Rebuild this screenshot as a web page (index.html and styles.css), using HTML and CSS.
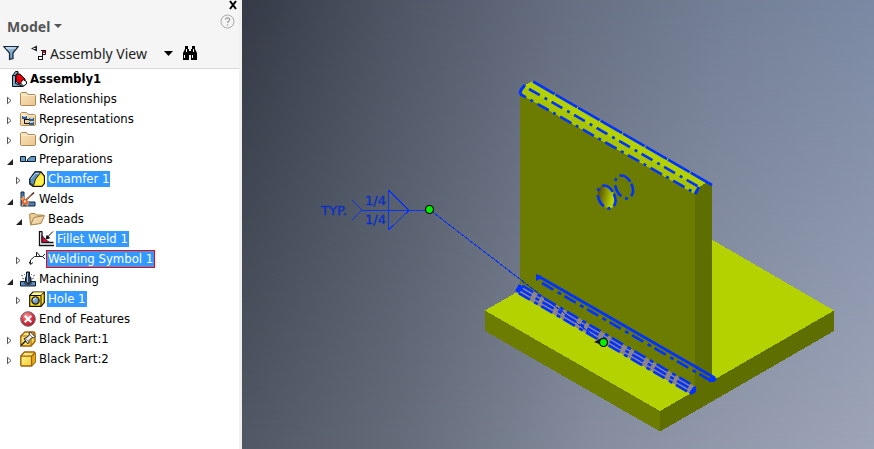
FILE: index.html
```html
<!DOCTYPE html>
<html lang="en">
<head>
<meta charset="utf-8">
<title>Assembly1</title>
<link rel="stylesheet" href="styles.css">
</head>
<body>
<svg class="defs" aria-hidden="true">
  <defs>
    <linearGradient id="tan" x1="0" y1="0" x2="1" y2="1"><stop offset="0" stop-color="#fbe6c0"/><stop offset="1" stop-color="#e8c48c"/></linearGradient>
    <linearGradient id="steel" x1="0" y1="0" x2="1" y2="1"><stop offset="0" stop-color="#b9d6ee"/><stop offset="1" stop-color="#4d7ba6"/></linearGradient>
    <linearGradient id="gold" x1="0" y1="0" x2="1" y2="1"><stop offset="0" stop-color="#fff8a0"/><stop offset="1" stop-color="#f3c81e"/></linearGradient>
    <radialGradient id="stop" cx=".4" cy=".3" r=".8"><stop offset="0" stop-color="#ff9a9a"/><stop offset=".5" stop-color="#e23440"/><stop offset="1" stop-color="#a30f1c"/></radialGradient>
    <symbol id="closed" viewBox="0 0 5 8"><path d="M.5 .8V7.2L4 4Z" fill="#fff" stroke="#555"/></symbol>
    <symbol id="open" viewBox="0 0 6 6"><path d="M6 0V6H0Z" fill="#222"/></symbol>
    <symbol id="folder" viewBox="0 0 16 16"><path d="M.5 14V2.500L1.500 1.500H6.500L8 3.500H14.500L15.500 4.500V14L14.500 14.500H1.500Z" fill="url(#tan)" stroke="#b08a56"/><path d="M1.500 4.500H14.500" stroke="#f9ecd4"/></symbol>
  </defs>
</svg>
<div class="app">
  <aside class="panel">
    <header class="head">
      <div class="closebar">
        <button class="plain" aria-label="Close"><svg width="10" height="10" viewBox="0 0 10 10"><path d="M2 1L8 9M8 1L2 9" stroke="#000" stroke-width="2"/></svg></button>
      </div>
      <div class="titlebar">
        <button class="plain title">Model <svg width="8" height="4" viewBox="0 0 8 4"><path d="M0 0H8L4 4Z" fill="#555"/></svg></button>
        <button class="plain help" aria-label="Help"><svg width="15" height="15" viewBox="0 0 15 15"><circle cx="7.500" cy="7.500" r="6.500" fill="none" stroke="#aaa"/><path d="M5.500 5.800C5.500 3.200 9.600 3.200 9.600 5.700C9.600 7.200 7.500 7.200 7.500 9M7.500 10.300V11.600" fill="none" stroke="#999" stroke-width="1.200"/></svg></button>
      </div>
      <div class="tools">
        <button class="plain" aria-label="Filter"><svg width="16" height="16" viewBox="0 0 16 16"><path d="M.7 1.500H15.300L10 8V13.500L6.500 14.500V8Z" fill="url(#steel)" stroke="#16293c" stroke-width="1.200"/><path d="M3 3H13" stroke="#e4f1fb"/></svg></button>
        <label class="view">
          <svg width="16" height="16" viewBox="0 0 16 16"><path d="M0 3.500L6 .5V6.500Z" fill="#222"/><path d="M2.500 3.500H4.500" stroke="#fff"/><path d="M7.500 11.500H11.500V6.500H13" fill="none" stroke="#111"/><rect x="7.500" y="11.500" width="4" height="3" fill="#fff" stroke="#111"/><rect x="12" y="5" width="3" height="3" fill="#e00010"/><path d="M10 5.500H14.500V9.500H12" fill="none" stroke="#111"/></svg>
          <select aria-label="Browser view"><option>Assembly View</option></select>
          <svg class="arrow" width="9" height="5" viewBox="0 0 9 5"><path d="M0 0H9L4.500 5Z" fill="#000"/></svg>
        </label>
        <button class="plain" aria-label="Find"><svg width="16" height="14" viewBox="0 0 16 14"><path d="M3 0H6V3H7V5H9V3H10V0H13V3L15 7V14H9V9H7V14H1V7L3 3Z" fill="#000"/><path d="M2.500 9V12M10.500 9V12M4.500 3V6M11.500 3V6" stroke="#f5f5f5"/></svg></button>
      </div>
    </header>
    <ul class="tree">
      <li>
        <div class="row root"><svg class="icon" viewBox="0 0 16 16"><path d="M1.500 4.500L4.500 .5H7V11L15 13L12 15.500H1.500Z" fill="#7dabd0" stroke="#111"/><path d="M1.500 4.500H4.500V12.500L12 15.500M4.500 4.500L7 1.500" fill="none" stroke="#111"/><path d="M5 3.500L9 3L14 8L14.500 11.500L8 13L5 10Z" fill="#e8000c" stroke="#111"/><path d="M9.500 12L12 8.500L15.500 10.500V13L12.500 15Z" fill="#fff" stroke="#111"/></svg><span class="name">Assembly1</span></div>
        <ul>
          <li><div class="row"><button class="toggle" aria-label="Expand"><svg class="shut"><use href="#closed"/></svg></button><svg class="icon"><use href="#folder"/></svg><span class="name">Relationships</span></div></li>
          <li><div class="row"><button class="toggle" aria-label="Expand"><svg class="shut"><use href="#closed"/></svg></button><svg class="icon" viewBox="0 0 16 16"><use href="#folder" width="16" height="16"/><path d="M4.500 7V12.500H10M4.500 8.500H10" fill="none" stroke="#111"/><path d="M2 5H7V8H2ZM9 7H14V10H9ZM9 11H14V14H9Z" fill="#2c5e92"/><path d="M3 5.500H6M10 7.500H13M10 11.500H13" stroke="#a8cdf0"/></svg><span class="name">Representations</span></div></li>
          <li><div class="row"><button class="toggle" aria-label="Expand"><svg class="shut"><use href="#closed"/></svg></button><svg class="icon"><use href="#folder"/></svg><span class="name">Origin</span></div></li>
          <li>
            <div class="row"><button class="toggle" aria-label="Collapse"><svg class="down"><use href="#open"/></svg></button><svg class="icon" viewBox="0 0 16 16"><path d="M.5 5.500H5.500V10.500H.5ZM7.500 10.500V8.500L11 5.500H15.500V10.500Z" fill="#679bc8" stroke="#0b1c30"/><path d="M5.500 10.500H8" stroke="#0b1c30"/></svg><span class="name">Preparations</span></div>
            <ul><li><div class="row"><button class="toggle" aria-label="Expand"><svg class="shut"><use href="#closed"/></svg></button><svg class="icon" viewBox="0 0 16 16"><path d="M.7 8L6 .8H12L15.400 5V12.500L13 15.300H4L.7 13Z" fill="#ffdf2e" stroke="#1b1600" stroke-width="1.200"/><path d="M.9 8L6 1H12L6.500 8L4.500 14.500L1 12Z" fill="#5d8fbe" stroke="#14283d"/><path d="M2 8L6.500 2.500H10" fill="none" stroke="#b9d9f3"/><path d="M7.500 9L12.500 3.500L14.500 6V12L12.500 14.300H6Z" fill="#fff04d"/></svg><span class="name picked">Chamfer 1</span></div></li></ul>
          </li>
          <li>
            <div class="row"><button class="toggle" aria-label="Collapse"><svg class="down"><use href="#open"/></svg></button><svg class="icon" viewBox="0 0 16 16"><path d="M1 1H4V11H15V15H1Z" fill="#4e82b4" stroke="#0d2640"/><path d="M4 11L1 7M4 11L2 15M4 11L8 15M4 11L9 12M4 11L3 5" stroke="#ff9a4a" stroke-width="1.500"/><circle cx="5" cy="10.500" r="2.600" fill="#f0501c"/><circle cx="5" cy="10.500" r="1.200" fill="#ffe0a0"/><path d="M6.500 8.500L14 1.500" stroke="#4a2520" stroke-width="1.600"/><path d="M7 8.300L11.500 4" stroke="#ff8a5a"/></svg><span class="name">Welds</span></div>
            <ul>
              <li>
                <div class="row"><button class="toggle" aria-label="Collapse"><svg class="down"><use href="#open"/></svg></button><svg class="icon" viewBox="0 0 16 16"><path d="M1.500 13.500L.5 3.500L2 2.500H6L7.500 4H13.500V6.500" fill="#eccd94" stroke="#a3834e"/><path d="M1.500 14L5 6.500L15.500 4.500L12 12.500Z" fill="url(#tan)" stroke="#a3834e"/></svg><span class="name">Beads</span></div>
                <ul><li><div class="row leaf"><svg class="icon" viewBox="0 0 16 16"><path d="M1 .5H4V11.500H15.500V15H1Z" fill="#fff"/><path d="M1.500 0V14.500H16M1 .7H4.500M4 1V11.500H15.500" fill="none" stroke="#111" stroke-width="1.300"/><path d="M4 4.500V11.500H11.500Q7 9 4 4.500Z" fill="#d90f2b" stroke="#20102c"/><path d="M15 .5L9.500 6M8 8L9 4.500L11.500 7Z" stroke="#111" fill="#111"/></svg><span class="name picked">Fillet Weld 1</span></div></li></ul>
              </li>
              <li><div class="row"><button class="toggle" aria-label="Expand"><svg class="shut"><use href="#closed"/></svg></button><svg class="icon" viewBox="0 0 16 16"><path d="M1.500 13V9L5.500 5.500H14M0 10.500L1.500 13.500L4 11.500M7.500 5V1L11.500 5.500M13.500 5.500L16 3M13.500 5.500L16 8" fill="none" stroke="#222"/></svg><span class="name picked framed">Welding Symbol 1</span></div></li>
            </ul>
          </li>
          <li>
            <div class="row"><button class="toggle" aria-label="Collapse"><svg class="down"><use href="#open"/></svg></button><svg class="icon" viewBox="0 0 16 16"><path d="M.5 10.500H5V13H11V10.500H15.500V15H.5Z" fill="#5c8cba" stroke="#0d1c30"/><path d="M6.500 1H9.500V5L11 7V11L8 13.500L5.500 11V7L6.500 5Z" fill="#30445f" stroke="#0b1422"/><path d="M7.500 2V11" stroke="#a8c5df"/><path d="M1 4L3 5M2 7L4 8M4 3L5 4M15 4L13 5M14 7L12 8M12 3L11 4" stroke="#777"/></svg><span class="name">Machining</span></div>
            <ul><li><div class="row"><button class="toggle" aria-label="Expand"><svg class="shut"><use href="#closed"/></svg></button><svg class="icon" viewBox="0 0 16 16"><path d="M.7 4.500L4 1H15.300V11.500L12 15.300H.7Z" fill="#ffe028" stroke="#191400" stroke-width="1.200"/><path d="M1.500 4.500L4.500 1.600H14.500L12 4.500Z" fill="#fff79c"/><path d="M.7 4.500H12V15M12 4.500L15.300 1" fill="none" stroke="#191400"/><circle cx="6.500" cy="9.500" r="3.600" fill="url(#steel)" stroke="#131313" stroke-width="1.300"/><path d="M4 9L7 6.500" stroke="#e5f3ff"/></svg><span class="name picked">Hole 1</span></div></li></ul>
          </li>
          <li><div class="row bare"><svg class="icon" viewBox="0 0 16 16"><circle cx="8" cy="8" r="7.300" fill="url(#stop)" stroke="#6d6d72"/><path d="M4.700 4.700L11.300 11.300M11.300 4.700L4.700 11.300" stroke="#fff" stroke-width="2.200"/></svg><span class="name">End of Features</span></div></li>
          <li><div class="row"><button class="toggle" aria-label="Expand"><svg class="shut"><use href="#closed"/></svg></button><svg class="icon" viewBox="0 0 16 16"><path d="M.8 5L5 1H14L15 2.500V10.500L11 15H.8Z" fill="url(#gold)" stroke="#a0600c" stroke-width="1.400"/><path d="M1 5H11V15M11 5L15 1.500" fill="none" stroke="#a0600c"/><path d="M1 14.500L6 9.500" stroke="#111" stroke-width="1.300"/><path d="M4 7.500L6 7L9.500 4L9 2L10.500 1L15 5.500L13.500 7L12 6.500L9 9.500V12L7.500 12.500Z" fill="#eee" stroke="#222"/><path d="M6 8L9 11M10 4L12 6" stroke="#888"/></svg><span class="name">Black Part:1</span></div></li>
          <li><div class="row"><button class="toggle" aria-label="Expand"><svg class="shut"><use href="#closed"/></svg></button><svg class="icon" viewBox="0 0 16 16"><path d="M.8 5L4.500 1H14L15.200 2V11L11.500 15H1.500L.8 14Z" fill="url(#gold)" stroke="#a0600c" stroke-width="1.400"/><path d="M11.500 5.500L15 2V11L11.500 14.500Z" fill="#e2a813"/><path d="M1 5.200H11.500V15M11.500 5.200L15 1.800" fill="none" stroke="#a0600c" stroke-width="1.200"/></svg><span class="name">Black Part:2</span></div></li>
        </ul>
      </li>
    </ul>
  </aside>
  <main class="viewport">
    <svg class="model" viewBox="242 0 632 449" preserveAspectRatio="xMinYMin slice" role="img" aria-label="Welded assembly">
      <defs><linearGradient id="bore" x1="0" y1="0" x2=".9" y2="1"><stop offset=".2" stop-color="#5b5200"/><stop offset=".75" stop-color="#b4d200"/></linearGradient></defs>
      <g shape-rendering="crispEdges">
        <path d="M485 310.500L660 209.500L834 310.500L660 411Z" fill="#b4d200"/>
        <path d="M485 310.500L660 411V431.500L485 331Z" fill="#6b7c00"/>
        <path d="M660 411L834 310.500V331L660 431.500Z" fill="#5f6e00"/>
        <path d="M520 93L695 193V391L520 290Z" fill="#6b7c00"/>
        <path d="M695 193L699 186L706 182L712 184V383L695 393Z" fill="#5f6e00"/>
        <path d="M520 94L523 86L533 81L712 184L706 183L699 187L695 194Z" fill="#b4d200"/>
        <path d="M520 94L525 88L699 187L695 194Z" fill="#a9c500"/>
        <path d="M515 292L521 284L696 387L691 394Z" fill="#8b8588"/>
      </g>
      <g fill="none" stroke="#0032ff" stroke-width="2.600">
        <path d="M533 81.500L712 185" stroke-dasharray="25 1"/>
        <path d="M529 89L699 187" stroke-dasharray="12.500 5.500 3 5"/>
        <path d="M520 94L695 193" stroke-dasharray="13 5 3 5" stroke-dashoffset="6"/>
        <path d="M520 94L521 90L525 85M695 194L699 187" stroke-width="3"/>
        <ellipse cx="606.500" cy="197" rx="8" ry="12" transform="rotate(-25 606.500 197)" fill="url(#bore)" stroke-dasharray="13 4 3 4"/>
        <ellipse cx="624" cy="187" rx="8" ry="12" transform="rotate(-25 624 187)" stroke-dasharray="13 4 3 4"/>
        <path d="M538 276L715 378"/>
        <path d="M542 283L713 382" stroke-dasharray="13 5 4 4"/>
        <path d="M522 285.500L694 386" stroke-dasharray="13 5 4 4"/>
        <path d="M520 289L692 389.500" stroke-dasharray="13 5 4 4"/>
        <path d="M517 292L690 393" stroke-dasharray="13 5 4 4" stroke-dashoffset="-2"/>
      </g>
      <g fill="#0032ff">
        <path d="M536 274L541 276L540 279L536 281Z"/>
        <path d="M515 291L519 284L524 287L519 293Z"/>
        <path d="M689 393L693 387L696 386V392L691 395Z"/>
        <path d="M708 379L713 376L717 379L714 382H709Z"/>
      </g>
      <g fill="none" stroke="#0a32f0" shape-rendering="crispEdges">
        <path d="M430 210L603 343M352 200L362 210L352 220M362 210.500H429M388.500 190V230M388.500 190L409 210.500L388.500 230"/>
      </g>
      <path d="M594 342L602 338V345Z" fill="#101030"/>
      <g fill="#00f000" stroke="#000" stroke-width="1.200">
        <circle cx="429.500" cy="209.500" r="4"/><circle cx="603.500" cy="342.500" r="4"/>
      </g>
      <g class="callout"><text x="321" y="215">TYP.</text><text x="365" y="205">1/4</text><text x="365" y="224">1/4</text></g>
    </svg>
  </main>
</div>
</body>
</html>
```
FILE: styles.css
```css
* { box-sizing: border-box; }
body {
  margin: 0;
  font-family: "DejaVu Sans Condensed", "DejaVu Sans", sans-serif;
  font-size: 13px;
  color: #000;
}
svg { display: block; flex: none; }
.defs { position: absolute; width: 0; height: 0; }
.app { display: flex; min-height: 100vh; }
.panel {
  display: flex;
  flex-direction: column;
  width: 242px;
  flex: none;
  background: #fff;
  border-right: 3px solid #f0f0f0;
}
.head { background: #f5f5f5; border-bottom: 1px solid #d9d9d9; }
.plain { display: flex; align-items: center; padding: 0; border: 0; background: none; font: inherit; }
.closebar { display: flex; justify-content: flex-end; height: 14px; padding-right: 1px; }
.closebar .plain { height: 10px; }
.titlebar { display: flex; justify-content: space-between; padding: 0 4px 0 7px; height: 24px; }
.title { gap: 4px; color: #555; font-weight: bold; font-size: 14px; font-family: "Noto Sans", sans-serif; }
.help { align-self: flex-start; }
.tools { display: flex; align-items: center; height: 30px; padding-left: 3px; }
.view { position: relative; display: flex; align-items: center; margin: 0 9px 0 12px; width: 142px; }
.view select {
  appearance: none;
  flex: 1;
  min-width: 0;
  margin-left: 3px;
  padding: 0;
  border: 0;
  background: none;
  color: #222;
  font: 14px "Noto Sans", sans-serif;
}
.arrow { position: absolute; right: 0; }
.tree, .tree ul { margin: 0; padding: 0; list-style: none; }
.tree ul ul { padding-left: 9px; }
.row { display: flex; align-items: center; height: 20px; padding-left: 7px; }
.root { padding-left: 11px; font-weight: bold; }
.bare, .leaf { padding-left: 20px; }
.toggle { width: 13px; height: 12px; padding: 0; border: 0; background: none; display: flex; align-items: flex-end; flex: none; }
.shut { width: 5px; height: 9px; }
.down { width: 6px; height: 6px; }
.icon { width: 16px; height: 16px; margin-right: 2px; }
.name { padding: 0 1px; line-height: 16px; white-space: nowrap; }
.picked { background: #3399ff; color: #fff; }
.framed { outline: 1px solid #f00; }
.viewport {
  position: relative;
  flex: 1;
  min-width: 0;
  background: linear-gradient(to right, #515965, #656d7b 25%, #858d9e 55%, #9199ab 75%, #9ea5b8);
}
.viewport::before {
  content: "";
  position: absolute;
  inset: 0;
  background: linear-gradient(to right, #353a46, #4c5361 22%, #656e80 50%, #727e94 75%, #7a89a3);
  mask-image: linear-gradient(to bottom, #000, transparent);
}
.model { position: absolute; inset: 0; width: 100%; height: 100%; }
.callout { fill: #0b30c4; stroke: #0b30c4; stroke-width: 0.4px; font: 13px "DejaVu Sans", sans-serif; }
```
